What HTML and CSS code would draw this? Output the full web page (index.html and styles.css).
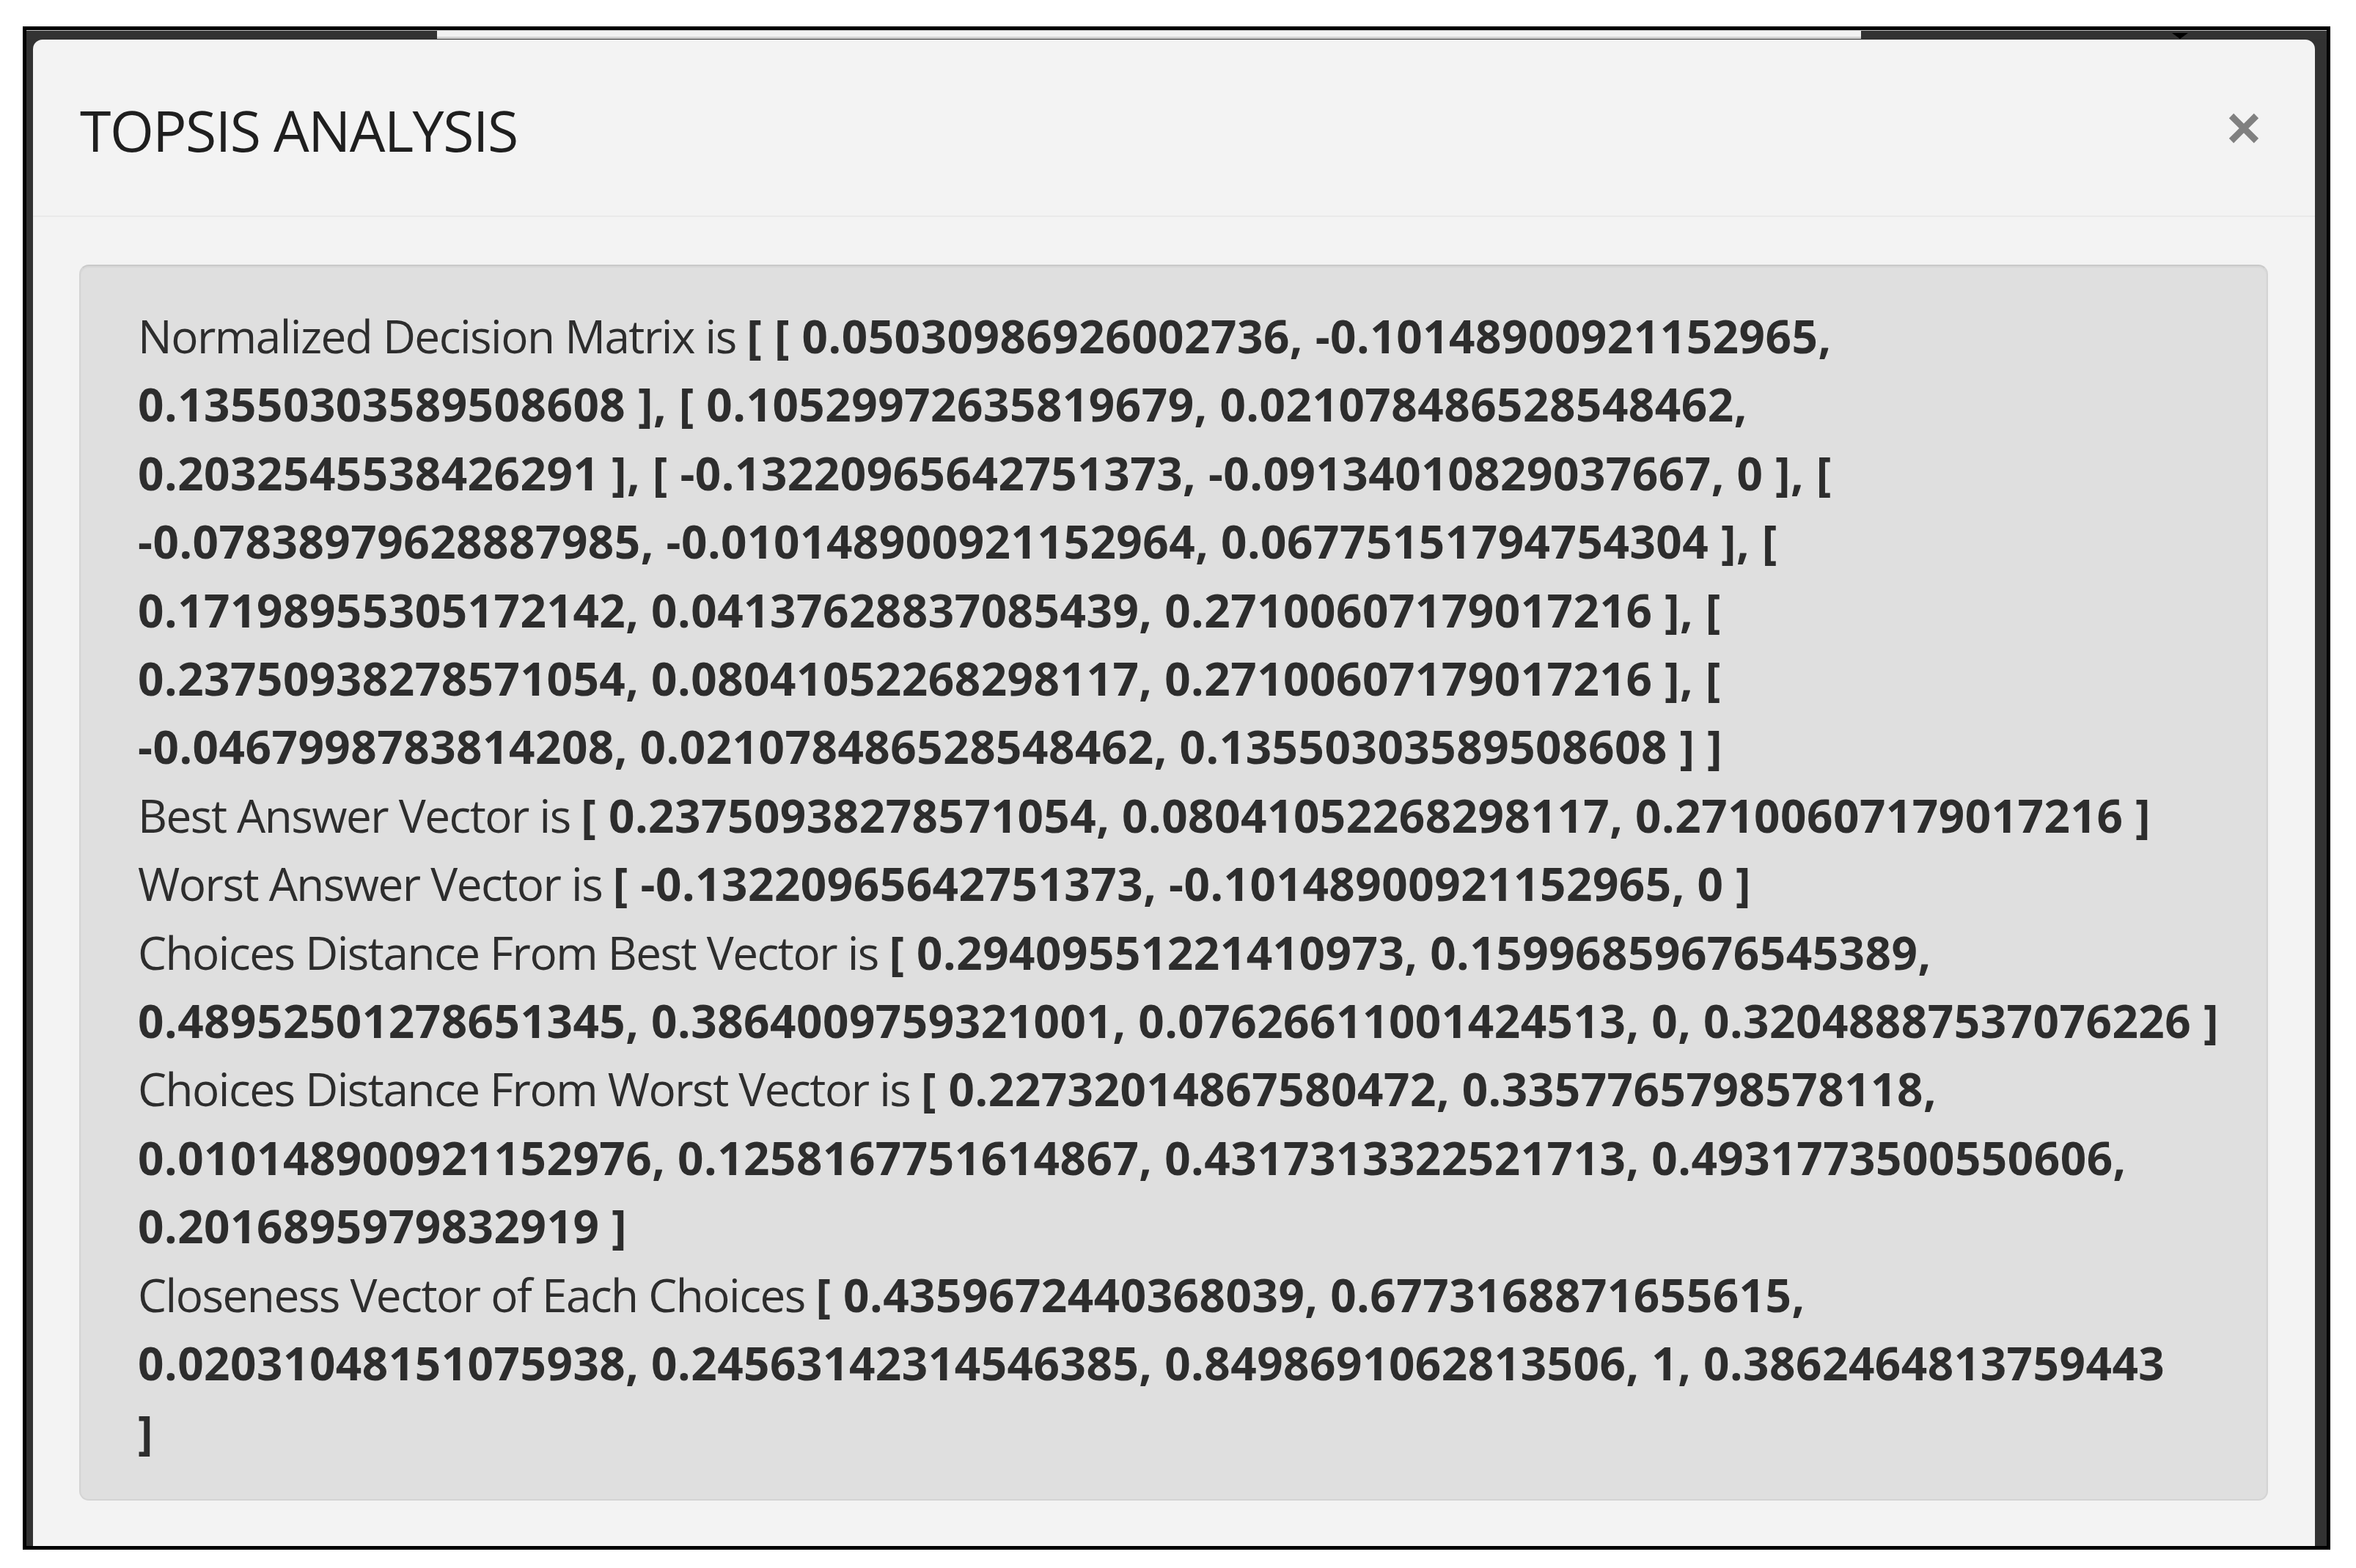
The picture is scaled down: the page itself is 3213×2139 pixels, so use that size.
FILE: index.html
```html
<!DOCTYPE html>
<html lang="en">
<head>
<meta charset="utf-8">
<title>TOPSIS Analysis</title>
<link rel="stylesheet" href="styles.css">
</head>
<body>
<div class="frame">
  <div class="topbar">
    <div class="seg seg-dark seg-left"></div>
    <div class="seg seg-light"></div>
    <div class="seg seg-dark seg-right"><span class="caret"></span></div>
  </div>
  <div class="modal">
    <div class="modal-header">
      <h4 class="modal-title">TOPSIS ANALYSIS</h4>
      <button class="close" type="button" aria-label="Close">
        <svg viewBox="0 0 44 44" width="44" height="44"><path d="M5 5 L39 39 M39 5 L5 39" /></svg>
      </button>
    </div>
    <div class="modal-body">
      <div class="well">
        <p>Normalized Decision Matrix is <b>[ [ 0.05030986926002736, -0.10148900921152965,<br>0.13550303589508608 ], [ 0.10529972635819679, 0.021078486528548462,<br>0.2032545538426291 ], [ -0.13220965642751373, -0.09134010829037667, 0 ], [<br>-0.07838979628887985, -0.010148900921152964, 0.06775151794754304 ], [<br>0.17198955305172142, 0.04137628837085439, 0.27100607179017216 ], [<br>0.23750938278571054, 0.08041052268298117, 0.27100607179017216 ], [<br>-0.0467998783814208, 0.021078486528548462, 0.13550303589508608 ] ]</b></p>
        <p>Best Answer Vector is <b>[ 0.23750938278571054, 0.08041052268298117, 0.27100607179017216 ]</b></p>
        <p>Worst Answer Vector is <b>[ -0.13220965642751373, -0.10148900921152965, 0 ]</b></p>
        <p>Choices Distance From Best Vector is <b>[ 0.29409551221410973, 0.15996859676545389,<br>0.48952501278651345, 0.3864009759321001, 0.07626611001424513, 0, 0.32048887537076226 ]</b></p>
        <p>Choices Distance From Worst Vector is <b>[ 0.22732014867580472, 0.3357765798578118,<br>0.010148900921152976, 0.1258167751614867, 0.4317313322521713, 0.4931773500550606,<br>0.2016895979832919 ]</b></p>
        <p>Closeness Vector of Each Choices <b>[ 0.4359672440368039, 0.6773168871655615,<br>0.02031048151075938, 0.24563142314546385, 0.8498691062813506, 1, 0.3862464813759443<br>]</b></p>
      </div>
    </div>
  </div>
</div>
</body>
</html>
```

FILE: styles.css
```css
html, body {
  margin: 0;
  padding: 0;
  background: #ffffff;
}

body {
  font-family: "Open Sans", "Noto Sans", "DejaVu Sans", sans-serif;
  color: #333333;
}

.frame {
  box-sizing: border-box;
  width: 3147px;
  margin: 36px 0 0 31px;
  border: 5px solid #000000;
  background: #323232;
}

.topbar {
  display: flex;
  height: 12px;
  border-top: 1px solid #bdbdbd;
}

.seg {
  height: 11px;
}

.seg-dark {
  background: #333333;
}

.seg-left {
  width: 560px;
}

.seg-light {
  width: 1942px;
  box-sizing: border-box;
  background: #f1f1f1;
  border-bottom: 3px solid #cfcfcf;
}

.seg-right {
  flex: 1;
  display: flex;
  justify-content: flex-start;
  padding-left: 424px;
}

.caret {
  display: block;
  width: 0;
  height: 0;
  margin-top: 3px;
  border-left: 11px solid transparent;
  border-right: 11px solid transparent;
  border-top: 8px solid #000000;
}

.modal {
  margin: 0 16px 0 9px;
  background: #f3f3f3;
  border-radius: 13px 13px 0 0;
}

.modal-header {
  display: flex;
  align-items: flex-start;
  justify-content: space-between;
  padding: 78px 75px 70px 64px;
  border-bottom: 2px solid #e9e9e9;
}

.modal-title {
  margin: 0;
  font-size: 77px;
  font-weight: 400;
  line-height: 92px;
  color: #1f1f1f;
  letter-spacing: -1.5px;
}

.close {
  margin: 21px 0 0 0;
  padding: 0;
  border: 0;
  background: transparent;
  width: 44px;
  height: 44px;
  cursor: pointer;
}

.close svg {
  display: block;
}

.close path {
  stroke: #808080;
  stroke-width: 9;
  fill: none;
}

.modal-body {
  padding: 65px 64px 62px 63px;
}

.well {
  box-sizing: border-box;
  min-height: 1686px;
  padding: 49px 20px 45px 78px;
  background: #dfdfdf;
  border: 2px solid #d4d4d4;
  border-top-color: #c9c9c9;
  border-radius: 13px;
  box-shadow: inset 0 2px 2px rgba(0, 0, 0, 0.04);
  font-size: 62px;
  line-height: 93.4px;
  color: #2d2d2d;
}

.well p {
  margin: 0;
  white-space: nowrap;
  letter-spacing: -1.5px;
}

.well b {
  font-weight: 700;
  letter-spacing: 0.5px;
}
```
